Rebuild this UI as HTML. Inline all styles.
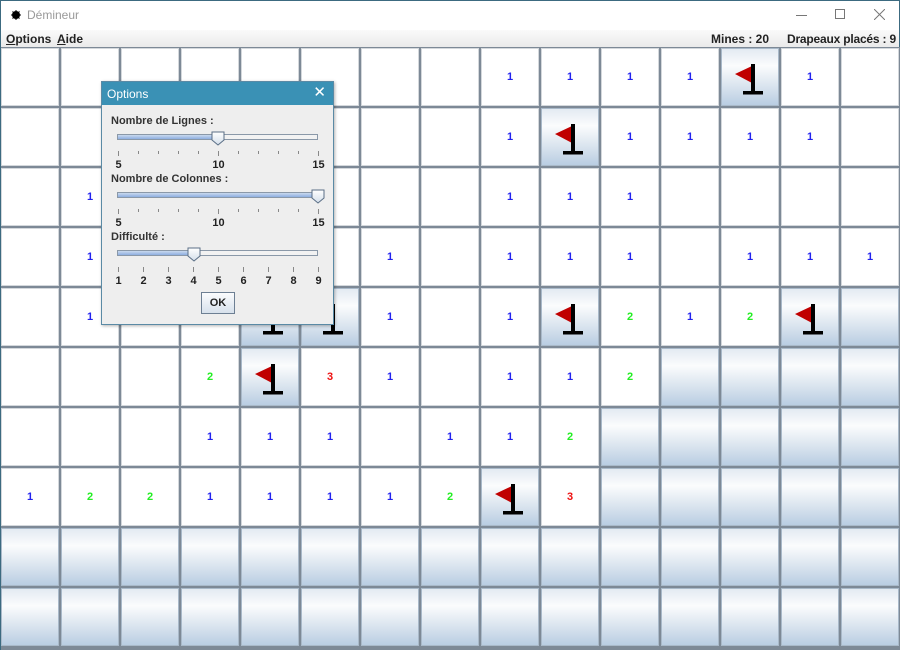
<!DOCTYPE html>
<html><head><meta charset="utf-8"><style>
*{margin:0;padding:0;box-sizing:border-box}
body{width:900px;height:650px;overflow:hidden;background:#fff;font-family:"Liberation Sans",Arial,sans-serif;position:relative}
.win{position:absolute;left:0;top:0;width:900px;height:650px;border:1px solid #3c6a80;border-bottom:none}
.tb{position:absolute;left:0;top:0;width:898px;height:29px;background:#fff}
.mb{position:absolute;left:0;top:29px;width:898px;height:18px;background:linear-gradient(#fafafa,#e9e9e9);font-size:12px;font-weight:bold;color:#222;white-space:nowrap}
.mb span{white-space:nowrap}
.grid{position:absolute;left:1px;top:47px;width:899px;height:603px;background:#7d8996;display:grid;grid-template-columns:repeat(15,58px);grid-template-rows:repeat(10,58px);gap:2px;padding:1px 0 0 0}
.c{background:#fff;border:1px solid #d4d8dc;position:relative;display:flex;align-items:center;justify-content:center;font-size:11px;font-weight:bold}
.h{border:1px solid #a9b9c9;background:linear-gradient(#e3eaf2 0%,#fbfcfd 30%,#dbe5ef 65%,#b9cde2 100%)}
.b{color:#2222ee}.g{color:#22ee22}.r{color:#ee1111}
.dlg{position:absolute;left:101px;top:81px;width:233px;height:244px;background:#eeeeee;border:1px solid #5a8aa5;box-shadow:1px 1px 3px rgba(0,0,0,.3)}
.dt{height:23px;background:#3a91b5;color:#fff;font-size:12px;padding:5px 0 0 5px;position:relative}
.lb{position:absolute;font-size:11px;font-weight:bold;color:#333;white-space:nowrap}
.trk{position:absolute;left:15px;width:201px;height:6px;border:1px solid #8a98a8;background:#f2f2f2}
.fill{position:absolute;left:0;top:0;height:4px;background:linear-gradient(#c9d9ee,#8daee0)}
.tick{position:absolute;width:1px;background:#888}
.num{position:absolute;font-size:11px;font-weight:bold;color:#222;transform:translateX(-50%)}
</style></head><body>
<div class="win">
<div class="tb">
<svg style="position:absolute;left:10px;top:9px" width="10" height="10"><circle cx="5" cy="5" r="4" fill="#000"/><path d="M5 0V10M0 5H10M1.5 1.5L8.5 8.5M8.5 1.5L1.5 8.5" stroke="#000" stroke-width="1"/></svg>
<span style="position:absolute;left:26px;top:7px;font-size:12px;color:#999">Démineur</span>
<div style="position:absolute;left:795px;top:14px;width:11px;height:1px;background:#777"></div>
<div style="position:absolute;left:834px;top:8px;width:10px;height:10px;border:1px solid #777"></div>
<svg style="position:absolute;left:873px;top:8px" width="11" height="11"><path d="M0 0L11 11M11 0L0 11" stroke="#777" stroke-width="1"/></svg>
</div>
<div class="mb">
<span style="position:absolute;left:5px;top:2px"><u>O</u>ptions</span>
<span style="position:absolute;left:56px;top:2px"><u>A</u>ide</span>
<span style="position:absolute;left:710px;top:2px">Mines : 20</span>
<span style="position:absolute;left:786px;top:2px;letter-spacing:-0.2px">Drapeaux placés : 9</span>
</div>
</div>
<div class="grid" id="g"></div>
<div class="dlg">
<div class="dt">Options<span style="position:absolute;right:7px;top:1px;font-size:15px">✕</span></div>
<div class="lb" style="left:9px;top:33px">Nombre de Lignes :</div>
<div class="trk" style="top:52px"><div class="fill" style="width:100px"></div></div>
<div class="lb" style="left:9px;top:91px">Nombre de Colonnes :</div>
<div class="trk" style="top:110px"><div class="fill" style="width:199px"></div></div>
<div class="lb" style="left:9px;top:149px">Difficulté :</div>
<div class="trk" style="top:168px"><div class="fill" style="width:76px"></div></div>
<div id="dx"></div>
<div style="position:absolute;left:99px;top:210px;width:34px;height:22px;border:1px solid #6d7f93;background:linear-gradient(#fbfcfd,#d7e1ec);font-size:11px;font-weight:bold;text-align:center;line-height:20px;color:#222">OK</div>
</div>
<script>
var F='<svg width="60" height="60" style="position:absolute;left:-1px;top:-1px"><path d="M14 26L31 18V35Z" fill="#c00000"/><rect x="30" y="16" width="4" height="30" fill="#000"/><rect x="22" y="43" width="20" height="3.5" fill="#000"/></svg>';
var B=[
"........1111F1.",
"........1F1111.",
".1......111....",
".1....1.111.111",
".1..FF1.1F212FH",
"...2F31.112HHHH",
"...111.112HHHHH",
"12211112F3HHHHH",
"HHHHHHHHHHHHHHH",
"HHHHHHHHHHHHHHH"];
var h='';
B.forEach(function(r){for(var i=0;i<15;i++){var ch=r[i];
if(ch=='H')h+='<div class="c h"></div>';
else if(ch=='F')h+='<div class="c h">'+F+'</div>';
else if(ch=='.')h+='<div class="c"></div>';
else h+='<div class="c '+(ch=='1'?'b':ch=='2'?'g':'r')+'">'+ch+'</div>';}});
document.getElementById('g').innerHTML=h;
function sl(top,vals,major,thumbX){var s='';var n=vals.length;
for(var i=0;i<n;i++){var x=16+200*i/(n-1);var maj=major.indexOf(i)>=0;
s+='<div class="tick" style="left:'+x+'px;top:'+(top+14)+'px;height:'+(maj?5:3)+'px"></div>';
var lab=vals[i];if(lab!=='')s+='<div class="num" style="left:'+(x+0.5)+'px;top:'+(top+22)+'px">'+lab+'</div>';}
s+='<svg style="position:absolute;left:'+(thumbX-7)+'px;top:'+(top-6)+'px" width="14" height="15"><path d="M1 1H13V9L7 14L1 9Z" fill="url(#tg)" stroke="#5b6f86"/><defs><linearGradient id="tg" x1="0" y1="0" x2="0" y2="1"><stop offset="0" stop-color="#fff"/><stop offset="1" stop-color="#d3deea"/></linearGradient></defs></svg>';
return s;}
var L=['5','','','','','10','','','','','15'];
document.getElementById('dx').innerHTML=
sl(55,L,[0,5,10],116)+sl(113,L,[0,5,10],216)+sl(171,['1','2','3','4','5','6','7','8','9'],[0,1,2,3,4,5,6,7,8],92);
</script>
</body></html>
